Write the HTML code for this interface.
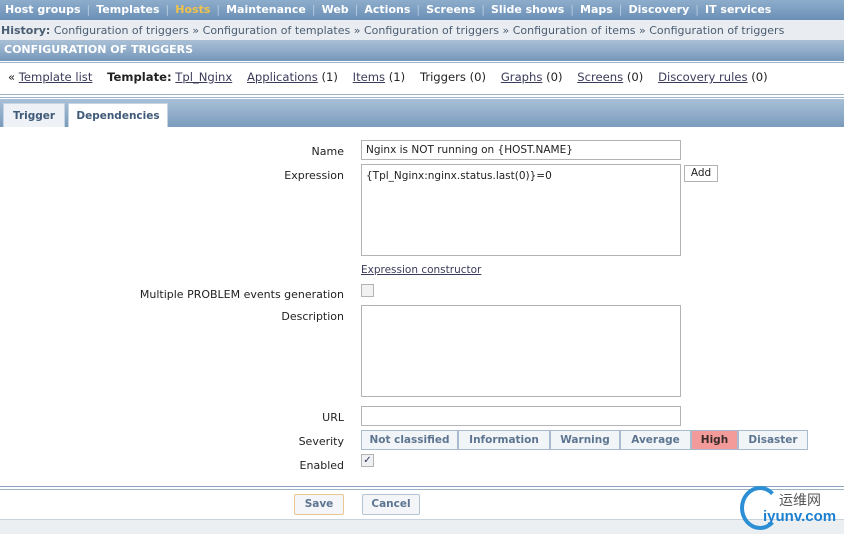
<!DOCTYPE html>
<html><head><meta charset="utf-8"><style>
*{margin:0;padding:0;box-sizing:border-box}
body{width:844px;height:534px;overflow:hidden;background:#fff;font-family:"DejaVu Sans","Liberation Sans",sans-serif;font-size:10px;color:#222;position:relative}
.a{position:absolute;white-space:nowrap}
.nav{left:0;top:0;width:844px;height:20px;background:linear-gradient(#8eadcc,#6a8fb6);color:#fff;font-weight:bold;font-size:11px;line-height:20px;padding-left:5px}
.nav span.s{color:#b7cbe0;margin:0 6px;font-weight:normal}
.hist{left:0;top:20px;width:844px;height:21px;background:#e9edf1;line-height:21px;color:#4b5d72;font-size:11px;padding-left:1px;border-bottom:1px solid #a9bcd0}
.title{left:0;top:41px;width:844px;height:20px;background:linear-gradient(#a7bfd6,#7596ba);color:#fff;font-weight:bold;font-size:11px;line-height:18px;padding-left:4px}
.line{left:0;width:844px;height:1px;background:#9db3c9}
.links{left:8px;top:70px;font-size:11.6px;color:#222}
.links u{color:#3b3b5a}
.tabbar{left:0;top:99px;width:844px;height:28px;background:linear-gradient(#a9c0d7,#7a9bbd)}
.tab{top:103px;height:24px;background:#fff;font-weight:bold;font-size:10.5px;color:#3f5a78;line-height:24px;text-align:center;border:1px solid #c6d4e2;border-bottom:none}
.lbl{font-size:11px;text-align:right;width:300px;left:44px}
.inp{border:1px solid #b3b3b3;background:#fff}
.sev{top:430px;height:20px;border:1px solid #a9bccf;background:#f2f5f8;color:#5d7590;font-weight:bold;font-size:10.5px;line-height:18px;text-align:center}
.btn{top:494px;height:21px;border:1px solid #b6c4d2;background:#f3f5f8;color:#5d7590;font-weight:bold;font-size:10.5px;line-height:19px;text-align:center;border-radius:2px}
</style></head><body>
<div class="a nav">Host groups<span class="s">|</span>Templates<span class="s">|</span><span style="color:#f0c34a">Hosts</span><span class="s">|</span>Maintenance<span class="s">|</span>Web<span class="s">|</span>Actions<span class="s">|</span>Screens<span class="s">|</span>Slide shows<span class="s">|</span>Maps<span class="s">|</span>Discovery<span class="s">|</span>IT services</div>
<div class="a hist"><b>History:</b> Configuration of triggers » Configuration of templates » Configuration of triggers » Configuration of items » Configuration of triggers</div>
<div class="a title">CONFIGURATION OF TRIGGERS</div>
<div class="a line" style="top:62px"></div>
<div class="a links">« <u>Template list</u>&nbsp;&nbsp;&nbsp; <b>Template:</b> <u>Tpl_Nginx</u>&nbsp;&nbsp;&nbsp; <u>Applications</u> (1)&nbsp;&nbsp;&nbsp; <u>Items</u> (1)&nbsp;&nbsp;&nbsp; Triggers (0)&nbsp;&nbsp;&nbsp; <u>Graphs</u> (0)&nbsp;&nbsp;&nbsp; <u>Screens</u> (0)&nbsp;&nbsp;&nbsp; <u>Discovery rules</u> (0)</div>
<div class="a line" style="top:94px"></div>
<div class="a line" style="top:97px"></div>
<div class="a tabbar"></div>
<div class="a tab" style="left:3px;width:62px;background:#eef2f6">Trigger</div>
<div class="a tab" style="left:68px;width:100px">Dependencies</div>
<div class="a lbl" style="top:145px">Name</div>
<div class="a inp" style="left:361px;top:140px;width:320px;height:20px;font-size:10.5px;padding:3px 4px">Nginx is NOT running on {HOST.NAME}</div>
<div class="a lbl" style="top:169px">Expression</div>
<div class="a inp" style="left:361px;top:164px;width:320px;height:92px;font-size:10.5px;padding:5px 4px">{Tpl_Nginx:nginx.status.last(0)}=0</div>
<div class="a inp" style="left:684px;top:165px;width:34px;height:17px;font-size:10.5px;text-align:center;line-height:15px">Add</div>
<div class="a" style="left:361px;top:264px;font-size:10.5px;color:#3b3b5a;text-decoration:underline">Expression constructor</div>
<div class="a lbl" style="top:288px">Multiple PROBLEM events generation</div>
<div class="a inp" style="left:361px;top:284px;width:13px;height:13px;background:#f2f2f2"></div>
<div class="a lbl" style="top:310px">Description</div>
<div class="a inp" style="left:361px;top:305px;width:320px;height:92px"></div>
<div class="a lbl" style="top:411px">URL</div>
<div class="a inp" style="left:361px;top:406px;width:320px;height:20px"></div>
<div class="a lbl" style="top:435px">Severity</div>
<div class="a sev" style="left:361px;width:97px">Not classified</div>
<div class="a sev" style="left:458px;width:92px">Information</div>
<div class="a sev" style="left:550px;width:70px">Warning</div>
<div class="a sev" style="left:620px;width:71px">Average</div>
<div class="a sev" style="left:691px;width:47px;background:#f39b9b;color:#3a2a2a">High</div>
<div class="a sev" style="left:738px;width:70px">Disaster</div>
<div class="a lbl" style="top:459px">Enabled</div>
<div class="a inp" style="left:361px;top:454px;width:13px;height:13px;background:#eef0f4;font-size:10px;line-height:11px;text-align:center;color:#335">✓</div>
<div class="a line" style="top:486px;background:#8aa4bf"></div>
<div class="a line" style="top:489px"></div>
<div class="a btn" style="left:294px;width:50px;border-color:#e8c690">Save</div>
<div class="a btn" style="left:362px;width:58px">Cancel</div>
<div class="a" style="left:0;top:519px;width:844px;height:15px;background:#eceff2;border-top:1px solid #c9d3dd"></div>
<div class="a" style="left:740px;top:486px;width:40px;height:44px;border:4px solid #2c8fd6;border-right-color:transparent;border-radius:50%"></div>
<div class="a" style="left:779px;top:490px;font-family:'Noto Sans CJK SC',sans-serif;font-size:14px;color:#555">运维网</div>
<div class="a" style="left:763px;top:508px;font-family:'Liberation Sans',sans-serif;font-weight:bold;font-size:15px;color:#1d7fcf">iyunv.com</div>
</body></html>
